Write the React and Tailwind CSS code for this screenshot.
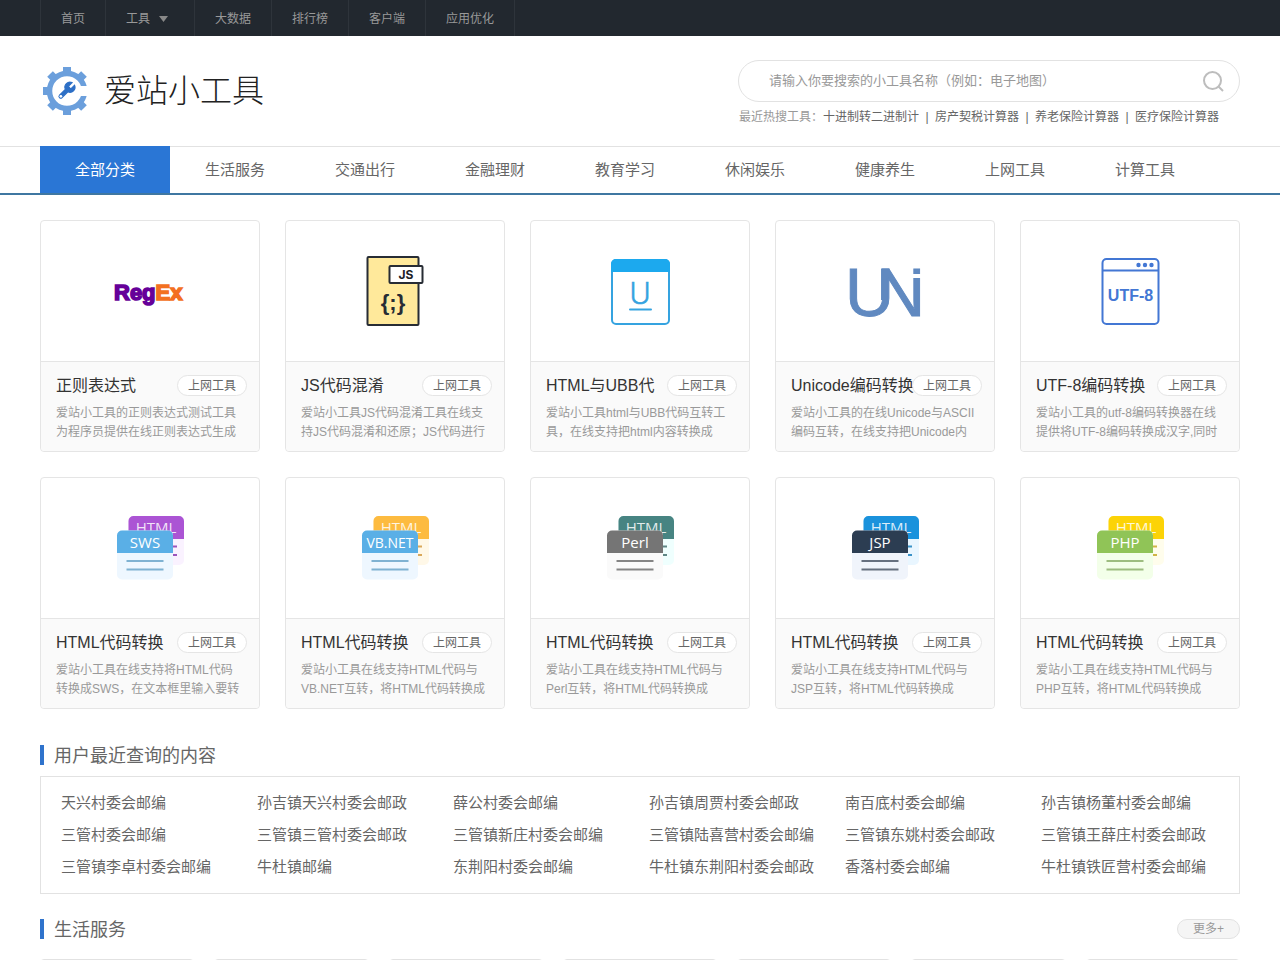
import React from "react";

const topLinks = ["大数据", "排行榜", "客户端", "应用优化"];

const hotLinks = ["十进制转二进制计", "房产契税计算器", "养老保险计算器", "医疗保险计算器"];

const categories = [
  "全部分类",
  "生活服务",
  "交通出行",
  "金融理财",
  "教育学习",
  "休闲娱乐",
  "健康养生",
  "上网工具",
  "计算工具",
];

const recent = [
  "天兴村委会邮编",
  "孙吉镇天兴村委会邮政",
  "薛公村委会邮编",
  "孙吉镇周贾村委会邮政",
  "南百底村委会邮编",
  "孙吉镇杨董村委会邮编",
  "三管村委会邮编",
  "三管镇三管村委会邮政",
  "三管镇新庄村委会邮编",
  "三管镇陆喜营村委会邮编",
  "三管镇东姚村委会邮政",
  "三管镇王薛庄村委会邮政",
  "三管镇李卓村委会邮编",
  "牛杜镇邮编",
  "东荆阳村委会邮编",
  "牛杜镇东荆阳村委会邮政",
  "香落村委会邮编",
  "牛杜镇铁匠营村委会邮编",
];

const LogoIcon = () => (
  <svg width="48" height="50" viewBox="0 0 48 50" className="shrink-0">
    <defs>
      <clipPath id="gear-open">
        <path d="M0 0H47V20H38L36 25L38 30H47V50H0Z" />
      </clipPath>
    </defs>
    <g clipPath="url(#gear-open)">
      <circle cx="27" cy="25" r="17.5" fill="none" stroke="#6b9fdc" strokeWidth="5.5" />
      <g fill="#6b9fdc">
        {[0, 45, 135, 180, 225, 270, 315].map((deg) => (
          <rect key={deg} x="23" y="1" width="8" height="6" transform={`rotate(${deg} 27 25)`} />
        ))}
      </g>
    </g>
    <g transform="translate(16.5 14.5) scale(0.84)">
      <path
        d="M14.7 6.3a1 1 0 0 0 0 1.4l1.6 1.6a1 1 0 0 0 1.4 0l3.77-3.77a6 6 0 0 1-7.94 7.94l-6.91 6.91a2.12 2.12 0 0 1-3-3l6.91-6.91a6 6 0 0 1 7.94-7.94l-3.76 3.76z"
        fill="#2d6fc6"
        stroke="#2d6fc6"
        strokeWidth="1.4"
      />
      <circle cx="5.2" cy="18.8" r="1.6" fill="#fff" />
    </g>
  </svg>
);

const RegexIcon = () => (
  <svg width="70" height="70" viewBox="0 0 70 70" className="overflow-visible">
    <text
      x="-1"
      y="44"
      fontSize="22"
      fontWeight="700"
      fontFamily="Liberation Sans, sans-serif"
      strokeWidth="1.6"
    >
      <tspan fill="#660099" stroke="#660099">Reg</tspan>
      <tspan fill="#f37021" stroke="#f37021">Ex</tspan>
    </text>
  </svg>
);

const JsIcon = () => (
  <svg width="70" height="70" viewBox="0 0 70 70">
    <rect x="7.5" y="1" width="51" height="68" rx="1" fill="#ffe99b" stroke="#272c34" strokeWidth="2" />
    <rect x="29.5" y="10" width="33" height="17" rx="1" fill="#fff" stroke="#272c34" strokeWidth="2" />
    <text x="46" y="23" fontSize="12" fontWeight="700" textAnchor="middle" fontFamily="Inter, sans-serif" fill="#1d2026">
      JS
    </text>
    <text x="33" y="54" fontSize="22" fontWeight="700" textAnchor="middle" fontFamily="Liberation Sans, sans-serif" fill="#272c34">
      {"{;}"}
    </text>
  </svg>
);

const UbbIcon = () => (
  <svg width="70" height="70" viewBox="0 0 70 70">
    <rect x="7" y="4" width="57" height="64" rx="4" fill="#fff" stroke="#35a3e0" strokeWidth="2" />
    <path d="M6 16V8a5 5 0 0 1 5-5h49a5 5 0 0 1 5 5v8z" fill="#1ca9ee" />
    <text x="35" y="48" fontSize="32" fontWeight="300" textAnchor="middle" fontFamily="Roboto, sans-serif" fill="#35a3e0" stroke="#35a3e0" strokeWidth="0.5">
      U
    </text>
    <path d="M25 53.5H46" stroke="#35a3e0" strokeWidth="2" strokeLinecap="round" />
  </svg>
);

const UniIcon = () => (
  <svg width="70" height="70" viewBox="0 0 70 70" className="overflow-visible">
    <defs>
      <clipPath id="uni-right">
        <path d="M30 0H74V18H62V22H74V70H41V44H30Z" />
      </clipPath>
    </defs>
    <g fontSize="68" fontFamily="Liberation Sans, sans-serif" fill="#6089c0" stroke="#6089c0">
      <text x="-5" y="60">U</text>
      <text x="26" y="60" clipPath="url(#uni-right)">N</text>
    </g>
  </svg>
);

const Utf8Icon = () => (
  <svg width="70" height="70" viewBox="0 0 70 70" fill="#4377d4">
    <rect x="7.5" y="3" width="56" height="65" rx="4" fill="none" stroke="#4377d4" strokeWidth="2" />
    <path d="M7 14.5H64" stroke="#4377d4" strokeWidth="2" />
    <circle cx="43.5" cy="9" r="2.2" />
    <circle cx="50" cy="9" r="2.2" />
    <circle cx="56.5" cy="9" r="2.2" />
    <text x="35.5" y="45" fontSize="16" fontWeight="700" textAnchor="middle" fontFamily="Liberation Sans, sans-serif">
      UTF-8
    </text>
  </svg>
);

const ConvertIcon = ({ label, size = 15, back, backBody, backLine, front, frontBody, frontLine }) => (
  <svg width="70" height="70" viewBox="0 0 70 70" fontFamily="Open Sans, sans-serif">
    <rect x="13.5" y="3" width="55.5" height="49" rx="5" fill={backBody} />
    <path d="M13.5 26V8a5 5 0 0 1 5-5H64a5 5 0 0 1 5 5v18z" fill={back} />
    <text x="41" y="20" fontSize="15" textAnchor="middle" fill="#fff" fillOpacity="0.85">
      HTML
    </text>
    <path d="M50 33.5H62M50 42H62" stroke={backLine} strokeWidth="2" />
    <rect x="2" y="17.5" width="56" height="49" rx="5" fill={frontBody} />
    <path d="M2 40V22.5a5 5 0 0 1 5-5H53a5 5 0 0 1 5 5V40z" fill={front} />
    <text x="30" y="35" fontSize={size} textAnchor="middle" fill="#fff">
      {label}
    </text>
    <path d="M11.5 48H48.5M11.5 56.5H48.5" stroke={frontLine} strokeWidth="2" />
  </svg>
);

const tools = [
  {
    title: "正则表达式",
    desc: "爱站小工具的正则表达式测试工具\n为程序员提供在线正则表达式生成",
    icon: <RegexIcon />,
  },
  {
    title: "JS代码混淆",
    desc: "爱站小工具JS代码混淆工具在线支\n持JS代码混淆和还原；JS代码进行",
    icon: <JsIcon />,
  },
  {
    title: "HTML与UBB代",
    desc: "爱站小工具html与UBB代码互转工\n具，在线支持把html内容转换成",
    icon: <UbbIcon />,
  },
  {
    title: "Unicode编码转换",
    desc: "爱站小工具的在线Unicode与ASCII\n编码互转，在线支持把Unicode内",
    icon: <UniIcon />,
  },
  {
    title: "UTF-8编码转换",
    desc: "爱站小工具的utf-8编码转换器在线\n提供将UTF-8编码转换成汉字,同时",
    icon: <Utf8Icon />,
  },
  {
    title: "HTML代码转换",
    desc: "爱站小工具在线支持将HTML代码\n转换成SWS，在文本框里输入要转",
    icon: (
      <ConvertIcon label="SWS" back="#ab54d4" backBody="#faf2ff" backLine="#9a55bd" front="#5aafe6" frontBody="#eef7ff" frontLine="#7fb2d2" />
    ),
  },
  {
    title: "HTML代码转换",
    desc: "爱站小工具在线支持HTML代码与\nVB.NET互转，将HTML代码转换成",
    icon: (
      <ConvertIcon label="VB.NET" size={14} back="#fdbb40" backBody="#fff8e8" backLine="#d9a85a" front="#5aafe6" frontBody="#eef7ff" frontLine="#7fb2d2" />
    ),
  },
  {
    title: "HTML代码转换",
    desc: "爱站小工具在线支持HTML代码与\nPerl互转，将HTML代码转换成",
    icon: (
      <ConvertIcon label="Perl" back="#478482" backBody="#effffe" backLine="#5f8785" front="#757575" frontBody="#fafafa" frontLine="#858585" />
    ),
  },
  {
    title: "HTML代码转换",
    desc: "爱站小工具在线支持HTML代码与\nJSP互转，将HTML代码转换成",
    icon: (
      <ConvertIcon label="JSP" back="#1a92dc" backBody="#e9f6ff" backLine="#3a92c8" front="#2c3d52" frontBody="#f0f4fb" frontLine="#66707f" />
    ),
  },
  {
    title: "HTML代码转换",
    desc: "爱站小工具在线支持HTML代码与\nPHP互转，将HTML代码转换成",
    icon: (
      <ConvertIcon label="PHP" back="#fcd307" backBody="#fffdec" backLine="#cfb545" front="#90c457" frontBody="#f3ffe9" frontLine="#9dbd80" />
    ),
  },
];

const TopBar = () => (
  <div className="bg-[#22282f] text-xs text-[#999]">
    <nav className="mx-auto flex h-9 max-w-[1200px]">
      <a href="#" className="flex items-center border-l border-[#2e343b] px-5 pt-0.5">
        首页
      </a>
      <a href="#" className="flex items-center gap-[9px] border-l border-[#2e343b] pt-0.5 pr-[26px] pl-5">
        工具
        <svg width="9" height="6" viewBox="0 0 9 6">
          <path d="M0 0H9L4.5 6Z" fill="#888" />
        </svg>
      </a>
      {topLinks.map((item) => (
        <a key={item} href="#" className="flex items-center border-l border-[#2e343b] px-5 pt-0.5 last:border-r">
          {item}
        </a>
      ))}
    </nav>
  </div>
);

const Header = () => (
  <header className="mx-auto flex h-[110px] max-w-[1200px] justify-between">
    <a href="#" className="flex items-center gap-4 text-[32px] font-light text-[#222]">
      <LogoIcon />
      爱站小工具
    </a>
    <div className="w-[502px] pt-6">
      <form className="flex h-[42px] items-center rounded-full border border-[#e2e2e2] pr-[15px] pl-[30px]">
        <input
          type="text"
          aria-label="搜索小工具"
          placeholder="请输入你要搜索的小工具名称（例如：电子地图）"
          className="min-w-0 flex-1 text-[13px] outline-none placeholder:text-[#999]"
        />
        <button type="button" aria-label="搜索">
          <svg width="22" height="22" viewBox="0 0 22 22" fill="none" stroke="#bdbdbd" strokeWidth="2">
            <circle cx="10.5" cy="10.5" r="8.5" />
            <path d="M16.5 16.5L21 21" />
          </svg>
        </button>
      </form>
      <p className="flex pt-[5px] pl-px text-xs leading-5 text-[#999]">
        最近热搜工具：
        {hotLinks.map((item, i) => (
          <React.Fragment key={item}>
            {i > 0 && <span className="w-4 text-center text-[#666]">|</span>}
            <a href="#" className="text-[#666]">
              {item}
            </a>
          </React.Fragment>
        ))}
      </p>
    </div>
  </header>
);

const CategoryNav = () => (
  <div className="border-t border-b-2 border-t-[#e2e2e2] border-b-[#3f77a1]">
    <nav className="mx-auto -mt-px flex max-w-[1200px]">
      {categories.map((item, i) => (
        <a
          key={item}
          href="#"
          className={`flex h-[47px] w-[130px] items-center justify-center pt-px text-[15px] ${
            i === 0 ? "bg-[#2a76d5] text-white" : "text-[#666]"
          }`}
        >
          {item}
        </a>
      ))}
    </nav>
  </div>
);

const ToolCard = ({ title, desc, icon }) => (
  <div className="rounded border border-[#e5e5e5]">
    <div className="flex h-[140px] items-center justify-center">{icon}</div>
    <div className="h-[90px] rounded-b border-t border-[#e5e5e5] bg-[#fafafa] pt-[13px] pr-3 pl-[15px]">
      <div className="flex items-center">
        <a href="#" className="min-w-0 flex-1 text-base leading-5 whitespace-nowrap text-[#333]">
          {title}
        </a>
        <a
          href="#"
          className="relative h-[21px] shrink-0 rounded-full border border-[#e5e5e5] bg-white px-2.5 text-xs leading-5 text-[#666]"
        >
          上网工具
        </a>
      </div>
      <p className="pt-2 text-xs leading-[19px] whitespace-pre text-[#999]">{desc}</p>
    </div>
  </div>
);

const SectionTitle = ({ children }) => (
  <h2 className="flex items-center gap-2.5 text-lg leading-5 text-[#666]">
    <span className="h-5 w-1 bg-[#2f73cc]" />
    <span className="-mb-0.5">{children}</span>
  </h2>
);

const App = () => {
  return (
    <div className="min-h-screen bg-white font-['Liberation_Sans','Noto_Sans_CJK_SC',sans-serif]">
      <TopBar />
      <Header />
      <CategoryNav />

      <main className="mx-auto max-w-[1200px] pt-[25px]">
        <div className="grid grid-cols-5 gap-[25px]">
          {tools.map((tool, i) => (
            <ToolCard key={i} {...tool} />
          ))}
        </div>

        {/* 最近查询 */}
        <section className="pt-9">
          <SectionTitle>用户最近查询的内容</SectionTitle>
          <div className="mt-[11px] grid grid-cols-6 border border-[#e2e2e2] py-2.5 pr-0.5 pl-5">
            {recent.map((item) => (
              <a key={item} href="#" className="text-[15px] leading-8 whitespace-nowrap text-[#666]">
                {item}
              </a>
            ))}
          </div>
        </section>

        {/* 生活服务 */}
        <section className="pt-[25px]">
          <div className="flex items-center justify-between">
            <SectionTitle>生活服务</SectionTitle>
            <a
              href="#"
              className="h-5 rounded-full border border-[#e2e2e2] bg-[#f5f5f5] px-[15px] text-xs leading-[18px] text-[#999]"
            >
              更多+
            </a>
          </div>
          <div className="mt-5 grid grid-cols-7 gap-5">
            {[1, 2, 3, 4, 5, 6, 7].map((n) => (
              <div key={n} className="h-40 rounded border border-[#e2e2e2]" />
            ))}
          </div>
        </section>
      </main>
    </div>
  );
};

export default App;
